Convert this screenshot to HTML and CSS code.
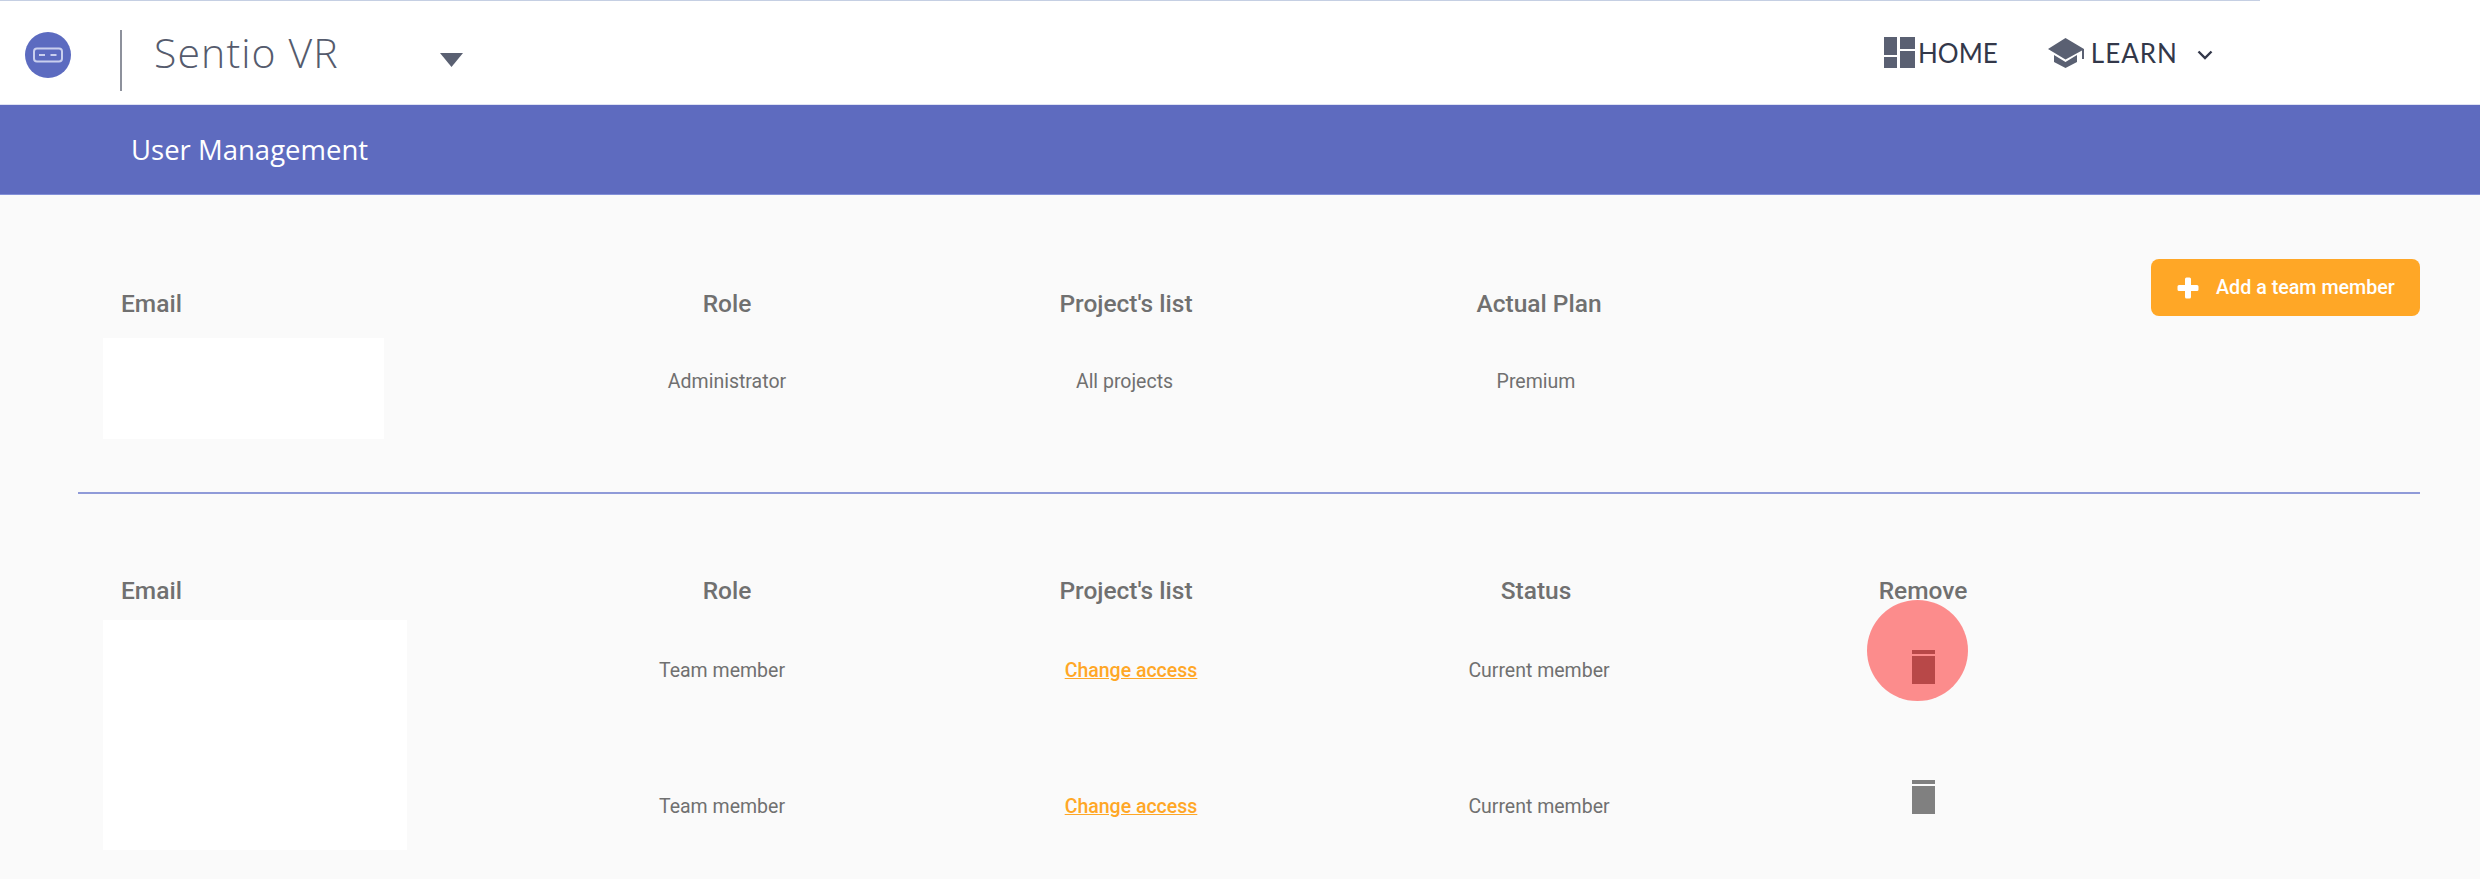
FILE: index.html
```html
<!DOCTYPE html>
<html lang="en">
<head>
  <meta charset="UTF-8" />
  <meta name="viewport" content="width=device-width, initial-scale=1.0"/>
  <title>User Management</title>
  <link rel="stylesheet" href="styles.css">
</head>
<body>
  <header class="topbar">
    <svg class="logo" width="46" height="46" viewBox="0 0 46 46">
      <circle cx="23" cy="23" r="23" fill="#5c6bc0"/>
      <rect x="9" y="16.500" width="28" height="13" rx="3" fill="none" stroke="#c9cfee" stroke-width="2"/>
      <rect x="14" y="22" width="6" height="2" fill="#c9cfee"/>
      <rect x="25.500" y="22" width="6" height="2" fill="#c9cfee"/>
    </svg>
    <span class="topbar-divider"></span>
    <span class="project-name">Sentio VR</span>
    <svg class="project-caret" width="23" height="14" viewBox="0 0 23 14"><path d="M0 0H23L11.500 14Z" fill="#5a6072"/></svg>

    <nav class="nav">
      <a class="nav-link">
        <svg width="31" height="31" viewBox="0 0 31 31" fill="#5a6072">
          <rect x="0" y="0" width="13" height="18"/>
          <rect x="16" y="0" width="15" height="12"/>
          <rect x="0" y="20" width="13" height="11"/>
          <rect x="16" y="14" width="15" height="17"/>
        </svg>
        <span>HOME</span>
      </a>
      <a class="nav-link nav-learn">
        <svg width="36" height="30" viewBox="0 0 36 30" fill="#5a6072">
          <path d="M17.500 0L36 11V21H34V12.500L17.500 21.500L0 11Z"/>
          <path d="M6 17L17.500 24L29 17V24L17.500 30L6 24Z"/>
        </svg>
        <span>LEARN</span>
        <svg class="nav-chevron" width="16" height="10" viewBox="0 0 16 10"><path d="M1.500 1.500L8 8L14.500 1.500" fill="none" stroke="#33384a" stroke-width="2.400"/></svg>
      </a>
    </nav>
  </header>

  <div class="page-title">User Management</div>

  <main>
    <section class="owner">
      <div class="user-grid owner-grid">
        <div class="head head-email">Email</div>
        <div class="head">Role</div>
        <div class="head">Project's list</div>
        <div class="head">Actual Plan</div>
        <div class="head"></div>
        <div class="email-box owner-box"></div>
        <div class="cell">Administrator</div>
        <div class="cell cell-projects">All projects</div>
        <div class="cell cell-plan">Premium</div>
      </div>
      <button class="add-btn">
        <svg width="22" height="22" viewBox="0 0 22 22"><path d="M8 2a1.500 1.500 0 0 1 1.500-1.500h3A1.500 1.500 0 0 1 14 2v6h6a1.500 1.500 0 0 1 1.500 1.500v3A1.500 1.500 0 0 1 20 14h-6v6a1.500 1.500 0 0 1-1.500 1.500h-3A1.500 1.500 0 0 1 8 20v-6H2a1.500 1.500 0 0 1-1.500-1.500v-3A1.500 1.500 0 0 1 2 8h6Z" fill="#fff"/></svg>
        Add a team member
      </button>
    </section>

    <hr class="separator">

    <section class="user-grid team-grid">
      <div class="head head-email">Email</div>
      <div class="head">Role</div>
      <div class="head">Project's list</div>
      <div class="head head-status">Status</div>
      <div class="head">Remove</div>

      <div class="email-box team-box"></div>
      <div class="cell cell-role">Team member</div>
      <div class="cell cell-link"><a class="change-link">Change access</a></div>
      <div class="cell">Current member</div>
      <div class="cell cell-remove">
        <span class="trash"></span>
        <span class="click-dot"></span>
      </div>

      <div class="cell cell-role">Team member</div>
      <div class="cell cell-link"><a class="change-link">Change access</a></div>
      <div class="cell">Current member</div>
      <div class="cell cell-remove cell-remove-low">
        <span class="trash"></span>
      </div>
    </section>
  </main>
</body>
</html>
```

FILE: styles.css
```css
html, body {
  height: 100%;
  overflow: hidden;
}

body {
  margin: 0;
  font-family: Roboto, sans-serif;
  background-color: #fafafa;
  color: #707070;
}

.topbar {
  height: 105px;
  box-sizing: border-box;
  display: flex;
  align-items: center;
  background: linear-gradient(to right, #c5cfe3 2260px, #fff 2260px) top left / 100% 1px no-repeat #fff;
  padding-left: 25px;
  border-bottom: 1px solid #dfe2f3;
}

.logo {
  margin-top: 5px;
}

.topbar-divider {
  width: 2px;
  height: 61px;
  margin: 17px 0 0 49px;
  background: #8d919c;
}

.project-name {
  margin-left: 32px;
  width: 286px;
  font-family: "Open Sans", sans-serif;
  font-weight: 300;
  font-size: 41px;
  letter-spacing: 1.100px;
  color: #555b6d;
}

.project-caret {
  margin-top: 15px;
}

.nav {
  display: flex;
  align-items: center;
  margin-left: 1421px;
}

.nav-link {
  display: flex;
  align-items: center;
  font-family: Lato, sans-serif;
  font-size: 26px;
  color: #33384a;
  margin-top: 1px;
}

.nav-link span {
  margin-left: 3px;
}

.nav-learn {
  margin-left: 50px;
}

.nav-learn span {
  margin-left: 7px;
  letter-spacing: 1px;
}

.nav-chevron {
  margin: 4px 0 0 19px;
}

.page-title {
  height: 90px;
  line-height: 90px;
  padding-left: 131px;
  background-color: #5e6bbf;
  border-bottom: 1px solid #8390d8;
  box-sizing: border-box;
  font-family: "Open Sans", sans-serif;
  font-size: 27.500px;
  color: #fff;
}

.owner {
  display: flex;
  justify-content: space-between;
  align-items: flex-start;
  padding: 64px 60px 0 78px;
}

.user-grid {
  display: grid;
  grid-template-columns: 424px 400px 398px 428px 340px;
  padding-left: 25px;
}

.owner-grid {
  padding-top: 25px;
  grid-template-rows: 54px 101px;
}

.head {
  font-size: 24.500px;
  font-weight: 500;
  line-height: 40px;
  text-align: center;
}

.head-email {
  text-align: left;
  padding-left: 18px;
}

.head-status {
  padding-right: 6px;
}

.cell {
  height: 86px;
  display: flex;
  align-items: center;
  justify-content: center;
  font-size: 19.500px;
}

.cell-projects {
  padding-right: 3px;
}

.cell-plan {
  padding-right: 6px;
}

.email-box {
  background: #fff;
}

.owner-box {
  width: 281px;
}

.team-box {
  width: 304px;
  height: 230px;
  grid-row: span 2;
}

.add-btn {
  width: 269px;
  height: 57px;
  display: flex;
  align-items: center;
  padding: 0 0 0 26px;
  border: 0;
  border-radius: 8px;
  background-color: #ffa726;
  font-family: Roboto, sans-serif;
  font-size: 19.700px;
  font-weight: 500;
  color: #fff;
}

.add-btn svg {
  margin-right: 17px;
}

.separator {
  height: 2px;
  margin: 53px 60px 0 78px;
  border: 0;
  background-color: #8f9ad8;
}

.team-grid {
  margin: 76px 0 0 78px;
  grid-template-rows: 50px 136px 100px;
}

.team-grid .head {
  padding-top: 1px;
}

.team-grid .cell {
  height: 100px;
}

.cell-role {
  padding-right: 10px;
}

.cell-link {
  padding-left: 10px;
}

.change-link {
  color: #ffa726;
  font-weight: 500;
  text-decoration: underline;
}

.team-grid .cell-remove {
  position: relative;
  align-items: flex-start;
  padding-top: 30px;
  box-sizing: border-box;
}

.team-grid .cell-remove-low {
  padding-top: 24px;
}

.trash {
  width: 23px;
  height: 28px;
  margin-top: 6px;
  background-color: #808080;
  position: relative;
}

.trash::before {
  content: "";
  position: absolute;
  left: 0;
  right: 0;
  top: -6px;
  height: 4px;
  background-color: #808080;
}

.click-dot {
  position: absolute;
  left: 114px;
  top: -20px;
  width: 101px;
  height: 101px;
  border-radius: 50%;
  background-color: rgba(255, 0, 0, 0.44);
}
```
